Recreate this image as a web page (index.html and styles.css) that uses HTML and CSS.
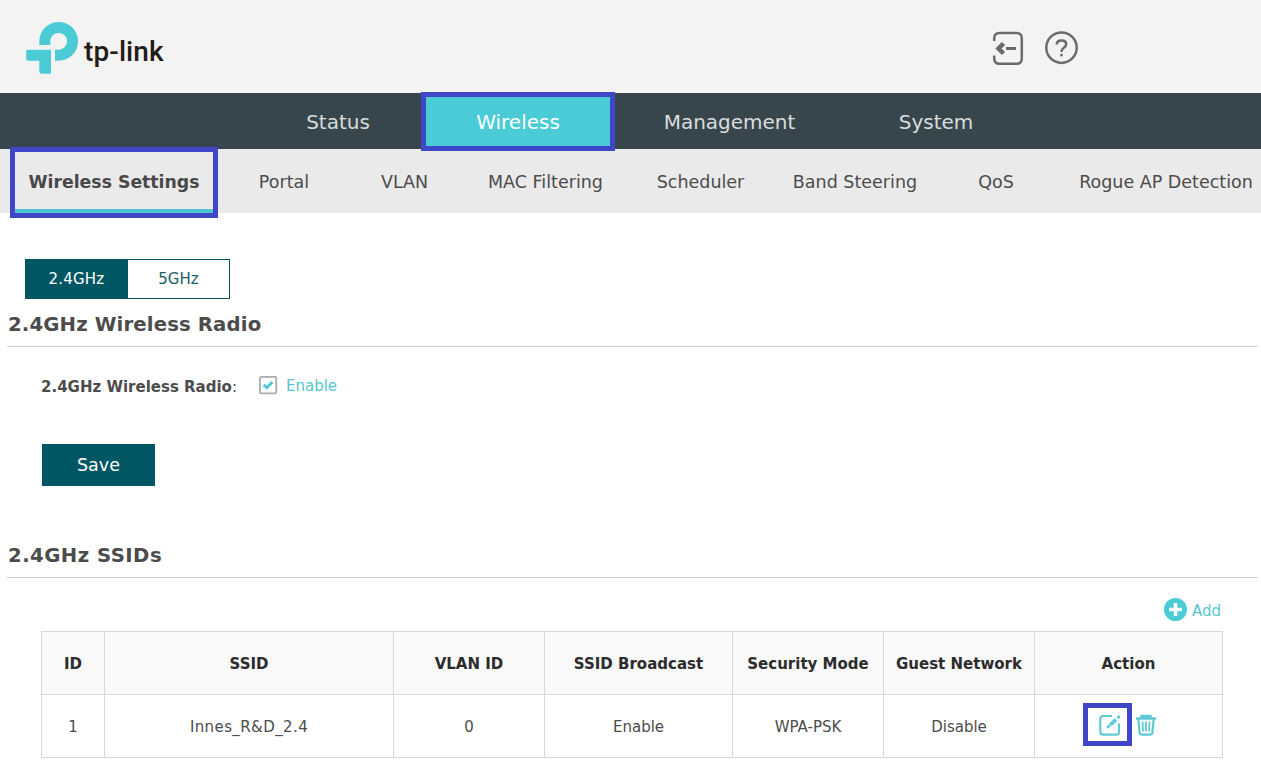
FILE: index.html
```html
<!DOCTYPE html>
<html lang="en">
<head>
<meta charset="utf-8">
<title>Wireless Settings</title>
<link rel="stylesheet" href="styles.css">
</head>
<body>
<header class="header">
  <div class="brand">
    <svg class="brand-mark" width="54" height="54" viewBox="0 0 54 54" fill="#4acbd6">
      <path d="M14.300 24V20.300A19.400 19.400 0 1 1 33.700 39.700H30V28.700H33.700A8.400 8.400 0 1 0 25.300 20.300V24Z"/>
      <path d="M2.500 28.700H26V52.700H17Q14.300 52.700 14.300 50V39.700H3.500Q1.200 39.700 1.200 37.400V30Q1.200 28.700 2.500 28.700Z"/>
    </svg>
    <span class="brand-name">tp-link</span>
  </div>
  <div class="tools">
    <svg width="34" height="36" viewBox="0 0 34 36" fill="none" stroke="#6b6b6b" stroke-width="2.500">
      <path d="M3.200 11V8.300Q3.200 3 8.500 3H25.500Q30.800 3 30.800 8.300V28.500Q30.800 33.800 25.500 33.800H8.500Q3.200 33.800 3.200 28.500V25.500"/>
      <path d="M15 18.500H25" stroke-width="3"/>
      <path d="M12.500 13.500L7.500 18.500L12.500 23.500" stroke-width="4.500"/>
    </svg>
    <svg width="36" height="36" viewBox="0 0 36 36" fill="none" stroke="#6b6b6b" stroke-width="2.500">
      <circle cx="18.500" cy="17.700" r="15.200"/>
      <path d="M13.800 14.500Q13.800 10.500 18.500 10.500T23.200 14.300Q23.200 16.200 20.800 17.700Q18.500 19.200 18.500 22"/>
      <path d="M18.500 23.800V26.300"/>
    </svg>
  </div>
</header>
<nav class="nav">
  <a class="nav-item">Status</a>
  <a class="nav-item nav-active">Wireless</a>
  <a class="nav-item">Management</a>
  <a class="nav-item">System</a>
</nav>
<nav class="subnav">
  <a class="sub-item sub-active">Wireless Settings</a>
  <a class="sub-item">Portal</a>
  <a class="sub-item">VLAN</a>
  <a class="sub-item">MAC Filtering</a>
  <a class="sub-item">Scheduler</a>
  <a class="sub-item">Band Steering</a>
  <a class="sub-item">QoS</a>
  <a class="sub-item">Rogue AP Detection</a>
</nav>
<main class="main">
  <div class="bands">
    <button class="band band-on">2.4GHz</button>
    <button class="band">5GHz</button>
  </div>
  <h2 class="title">2.4GHz Wireless Radio</h2>
  <div class="field">
    <span class="label"><b>2.4GHz Wireless Radio</b>:</span>
    <svg width="20" height="20" viewBox="0 0 20 20" fill="none">
      <rect x="1.900" y="0.900" width="16.400" height="16.400" rx="1.500" stroke="#aaa" stroke-width="1.800"/>
      <path d="M5.700 8.800L8.800 11.800L14.400 6" stroke="#4acbd6" stroke-width="2.800"/>
    </svg>
    <span class="enable">Enable</span>
  </div>
  <button class="save">Save</button>
  <h2 class="title title-ssids">2.4GHz SSIDs</h2>
  <div class="add">
    <svg width="24" height="24" viewBox="0 0 24 24">
      <circle cx="11.500" cy="11.500" r="11.500" fill="#4acbd6"/>
      <path d="M11.500 5V18M5 11.500H18" stroke="#fff" stroke-width="3.500"/>
    </svg>
    <span class="add-text">Add</span>
  </div>
  <table class="table">
    <colgroup><col class="c1"><col class="c2"><col class="c3"><col class="c4"><col class="c3"><col class="c3"><col class="c4"></colgroup>
    <tr><th>ID</th><th>SSID</th><th>VLAN ID</th><th>SSID Broadcast</th><th>Security Mode</th><th>Guest Network</th><th>Action</th></tr>
    <tr><td>1</td><td class="ssid">Innes_R&amp;D_2.4</td><td>0</td><td>Enable</td><td>WPA-PSK</td><td>Disable</td>
      <td class="cell-actions"><div class="actions">
        <span class="edit">
          <svg width="22" height="22" viewBox="0 0 22 22" fill="none" stroke="#5fcad4" stroke-width="2.200">
            <path d="M13 2H4Q1.300 2 1.300 4.700V18Q1.300 20.700 4 20.700H17.300Q20 20.700 20 18V9.500"/>
            <path d="M11.300 10.900L17 5.500" stroke-width="3.600"/>
            <path d="M18.400 4.200L20.700 2" stroke-width="3"/>
            <path d="M8 13.800L10.800 11.200" stroke-width="2.400"/>
          </svg>
        </span>
        <svg width="20" height="22" viewBox="0 0 20 22" fill="none" stroke="#5fcad4" stroke-width="2.200">
          <path d="M0 4.500H20M5.500 4V2H14.500V4" stroke-width="2.400"/>
          <path d="M2.300 5L3.600 18.300Q3.800 20.600 6 20.600H14Q16.200 20.600 16.400 18.300L17.700 5"/>
          <path d="M6.500 7.500L7 17.500M10 7.500V17.500M13.500 7.500L13 17.500" stroke-width="1.800"/>
        </svg>
      </div></td></tr>
  </table>
</main>
</body>
</html>
```
FILE: styles.css
```css
* { box-sizing: border-box; }
body {
  margin: 0;
  height: 769px;
  overflow: hidden;
  background: #fff;
  color: #4c4c4c;
  font: 15px/20px "DejaVu Sans", sans-serif;
}
.header {
  height: 93px;
  padding: 21px 182px 0 25px;
  background: #f3f3f3;
  display: flex;
  justify-content: space-between;
}
.brand { display: flex; gap: 5px; height: 54px; }
.brand-name {
  padding-top: 13px;
  font: 500 28px/36px Roboto, sans-serif;
  letter-spacing: 0.1px;
  color: #231c19;
}
.tools { display: flex; gap: 18px; padding-top: 9px; }
.nav {
  display: grid;
  grid-template-columns: 166px 194px 229px 184px;
  height: 56px;
  padding-left: 255px;
  background: #37464c;
  color: #dadddd;
  font-size: 20px;
}
.nav-item, .sub-item { display: flex; align-items: center; justify-content: center; white-space: nowrap; }
.nav-item { padding-top: 2px; }
.nav-active {
  margin: -1px 0 -2px;
  padding: 0;
  border: 5px solid #4046c8;
  background: #4acbd6;
  color: #fff;
  z-index: 1;
}
.subnav {
  display: grid;
  grid-template-columns: 208px 132px 109px 173px 137px 172px 110px 230px;
  height: 64px;
  padding: 0 0 0 10px;
  background: #eaeaea;
  font-size: 17.500px;
}
.sub-item { padding-top: 1px; }
.sub-active {
  margin: -2px 0 -5px;
  padding: 0 0 2px;
  border: 5px solid #4046c8;
  box-shadow: inset 0 -4px #4fc4d0;
  font-weight: bold;
  font-size: 17.300px;
  color: #484848;
}
.main { padding: 46px 4px 0 7px; }
.bands { display: flex; width: 205px; height: 40px; margin-left: 18px; border: 1px solid #005663; }
.band { flex: none; width: 101px; padding: 0; border: 0; background: #fff; color: #1b5b66; font: 15px/38px "DejaVu Sans", sans-serif; }
.band-on { width: 102px; padding-right: 1px; background: #005663; color: #fff; letter-spacing: 0.2px; }
.title {
  height: 48px;
  margin: 0;
  padding: 13px 0 0 1px;
  border-bottom: 1px solid #ccc;
  font-size: 19.700px;
  line-height: 26px;
  letter-spacing: 0.130px;
}
.title-ssids { margin-top: 44px; letter-spacing: 0.450px; }
.field { display: flex; align-items: center; height: 20px; margin: 29px 0 0 34px; }
.label { width: 217px; padding-top: 1px; }
.enable { margin-left: 8px; color: #58c5cd; }
.save {
  display: block;
  width: 113px;
  height: 42px;
  margin: 48px 0 0 35px;
  border: 0;
  background: #005663;
  color: #fff;
  font: 17.500px/40px "DejaVu Sans", sans-serif;
}
.add { display: flex; align-items: center; justify-content: flex-end; gap: 4px; height: 24px; margin: 20px 36px 9px 0; color: #58c5cd; }
.add-text { padding-top: 2px; }
.table { width: 1182px; margin-left: 34px; border-collapse: collapse; table-layout: fixed; text-align: center; }
.c1 { width: 63px; }
.c2 { width: 289px; }
.c3 { width: 151px; }
.c4 { width: 188px; }
th, td { height: 63px; padding: 2px 0 0; border: 1px solid #d8d8d8; white-space: nowrap; }
th { background: #f9f9f9; color: #2c2c2c; }
.ssid { letter-spacing: 0.400px; }
.cell-actions { padding: 0; }
.actions { display: flex; align-items: center; height: 43px; padding-left: 48px; gap: 4px; margin-top: -3px; }
.edit { display: flex; align-items: center; justify-content: center; width: 49px; height: 43px; padding-left: 4px; border: 5px solid #4046c8; }
```
